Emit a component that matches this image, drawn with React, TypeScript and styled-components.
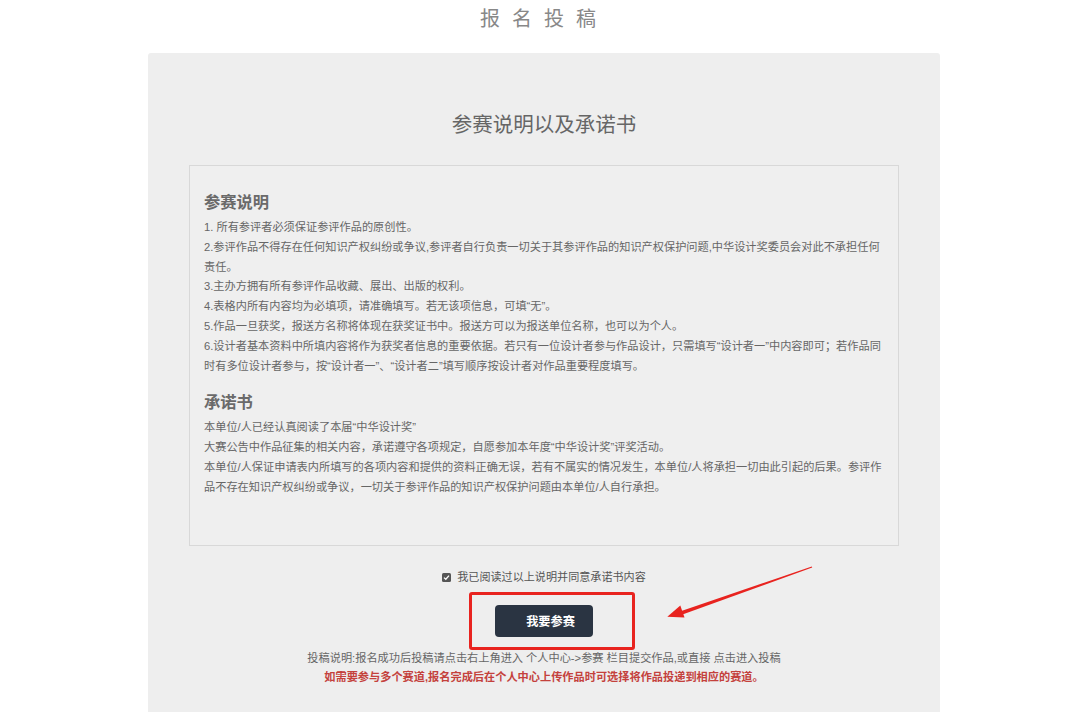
import React from 'react';
import styled, { createGlobalStyle } from 'styled-components';

const GlobalStyle = createGlobalStyle`
  html, body {
    margin: 0;
    padding: 0;
    background: #ffffff;
  }
  body {
    font-family: "Liberation Sans", "Noto Sans CJK SC", sans-serif;
    color: #666666;
  }
`;

const rules: string[][] = [
  ['1. 所有参评者必须保证参评作品的原创性。'],
  [
    '2.参评作品不得存在任何知识产权纠纷或争议,参评者自行负责一切关于其参评作品的知识产权保护问题,中华设计奖委员会对此不承担任何',
    '责任。',
  ],
  ['3.主办方拥有所有参评作品收藏、展出、出版的权利。'],
  ['4.表格内所有内容均为必填项，请准确填写。若无该项信息，可填“无”。'],
  ['5.作品一旦获奖，报送方名称将体现在获奖证书中。报送方可以为报送单位名称，也可以为个人。'],
  [
    '6.设计者基本资料中所填内容将作为获奖者信息的重要依据。若只有一位设计者参与作品设计，只需填写“设计者一”中内容即可；若作品同',
    '时有多位设计者参与，按“设计者一”、“设计者二”填写顺序按设计者对作品重要程度填写。',
  ],
];

const pledge: string[][] = [
  ['本单位/人已经认真阅读了本届“中华设计奖”'],
  ['大赛公告中作品征集的相关内容，承诺遵守各项规定，自愿参加本年度“中华设计奖”评奖活动。'],
  [
    '本单位/人保证申请表内所填写的各项内容和提供的资料正确无误，若有不属实的情况发生，本单位/人将承担一切由此引起的后果。参评作',
    '品不存在知识产权纠纷或争议，一切关于参评作品的知识产权保护问题由本单位/人自行承担。',
  ],
];

export default function App() {
  return (
    <>
      <GlobalStyle />
      <Page>
        <PageTitle>报名投稿</PageTitle>
        <Card>
          <CardTitle>参赛说明以及承诺书</CardTitle>
          <NoticeBox>
            <SectionTitle>参赛说明</SectionTitle>
            {rules.map((p, i) => (
              <Para key={i}>
                {p.map((line, j) => (
                  <Line key={j}>{line}</Line>
                ))}
              </Para>
            ))}
            <SectionTitle $gap>承诺书</SectionTitle>
            {pledge.map((p, i) => (
              <Para key={i}>
                {p.map((line, j) => (
                  <Line key={j}>{line}</Line>
                ))}
              </Para>
            ))}
          </NoticeBox>

          <AgreeRow>
            <CheckBox>
              <svg width="7" height="7" viewBox="0 0 7 7">
                <path d="M1 3.6 L2.8 5.3 L6 1.6" fill="none" stroke="#fff" strokeWidth="1.3" />
              </svg>
            </CheckBox>
            我已阅读过以上说明并同意承诺书内容
          </AgreeRow>

          <ActionRow>
            <ButtonWrap>
              <JoinButton type="button">我要参赛</JoinButton>
              <Highlight />
              <Arrow width="156" height="66" viewBox="0 0 156 66">
                <polygon points="152.2,7.6 151.8,6.4 19.9,51.5 21.1,54.9" fill="#e8231f" />
                <polygon points="7.3,56.7 24.5,57.6 20.3,45.4" fill="#e8231f" />
              </Arrow>
            </ButtonWrap>
          </ActionRow>

          <Hint>投稿说明:报名成功后投稿请点击右上角进入 个人中心-&gt;参赛 栏目提交作品,或直接 点击进入投稿</Hint>
          <Hint $warn>如需要参与多个赛道,报名完成后在个人中心上传作品时可选择将作品投递到相应的赛道。</Hint>
        </Card>
      </Page>
    </>
  );
}

const Page = styled.div`
  padding-left: 8px;
  display: flex;
  flex-direction: column;
  align-items: center;
`;

const PageTitle = styled.h1`
  margin: 0;
  padding: 5px 0 0 0;
  font-size: 20px;
  line-height: 28px;
  font-weight: 400;
  letter-spacing: 12px;
  color: #888888;
`;

const Card = styled.div`
  width: 792px;
  box-sizing: border-box;
  margin-top: 20px;
  padding: 57px 41px 80px;
  background: #eeeeee;
  border-radius: 3px;
  display: flex;
  flex-direction: column;
  align-items: stretch;
`;

const CardTitle = styled.h2`
  margin: 0 0 25px;
  text-align: center;
  font-size: 20.5px;
  line-height: 30px;
  font-weight: 400;
  color: #666666;
`;

const NoticeBox = styled.div`
  border: 1px solid #d8d8d8;
  background: #efefef;
  padding: 24px 14px 47px;
`;

const SectionTitle = styled.h3<{ $gap?: boolean }>`
  margin: ${p => (p.$gap ? '14px' : '0')} 0 4px;
  font-size: 16.3px;
  line-height: 24px;
  font-weight: 700;
  color: #6a6a6a;
`;

const Para = styled.div`
  font-size: 11.2px;
  line-height: 19.8px;
  color: #666666;
`;

const Line = styled.div`
  white-space: nowrap;
`;

const AgreeRow = styled.div`
  margin-top: 22px;
  display: flex;
  align-items: center;
  justify-content: center;
  gap: 6px;
  font-size: 11.1px;
  line-height: 19px;
  color: #555555;
`;

const CheckBox = styled.span`
  width: 9px;
  height: 9px;
  border-radius: 1.5px;
  background: #555555;
  display: inline-flex;
  align-items: center;
  justify-content: center;
`;

const ActionRow = styled.div`
  margin-top: 18px;
  display: flex;
  justify-content: center;
`;

const ButtonWrap = styled.div`
  position: relative;
  display: inline-block;
`;

const JoinButton = styled.button`
  display: block;
  width: 98px;
  height: 32px;
  padding: 0 18px 0 31px;
  border: none;
  border-radius: 4px;
  background: #2a3442;
  color: #ffffff;
  font-family: "Liberation Sans", "Noto Sans CJK SC", sans-serif;
  font-size: 12.2px;
  font-weight: 700;
  white-space: nowrap;
`;

const Highlight = styled.div`
  position: absolute;
  top: -13px;
  left: -26px;
  right: -42px;
  bottom: -13px;
  border: 3px solid #e8231f;
  border-radius: 3px;
  pointer-events: none;
`;

const Arrow = styled.svg`
  position: absolute;
  left: 165px;
  top: -45px;
  overflow: visible;
`;

const Hint = styled.div<{ $warn?: boolean }>`
  margin-top: ${p => (p.$warn ? '0' : '12px')};
  text-align: center;
  font-size: 11.2px;
  line-height: 19.4px;
  white-space: nowrap;
  color: ${p => (p.$warn ? '#c4413c' : '#666666')};
  font-weight: ${p => (p.$warn ? 700 : 400)};
`;
